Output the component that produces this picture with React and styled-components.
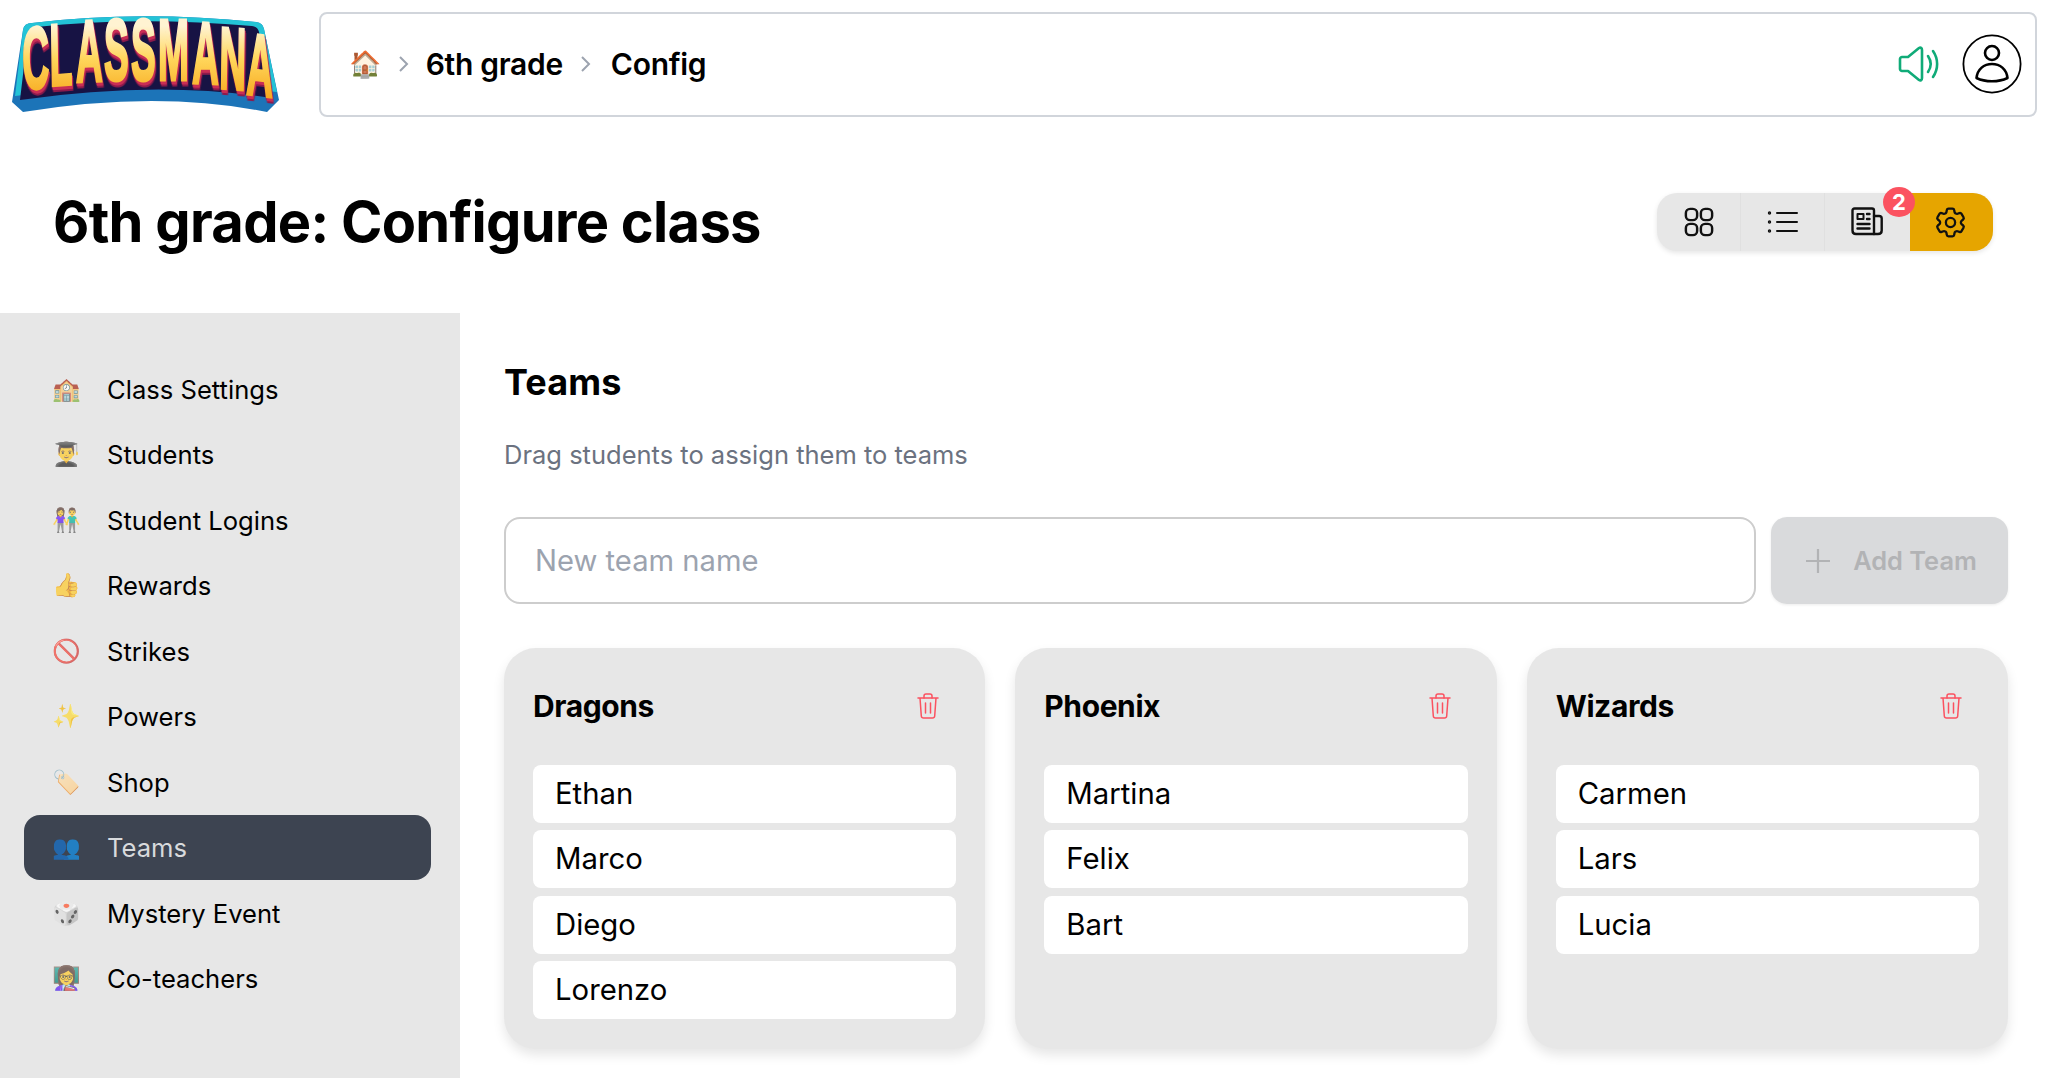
import React from "react";
import styled, { createGlobalStyle } from "styled-components";

const GlobalStyle = createGlobalStyle`
	* { box-sizing: border-box; }
	html, body { margin: 0; padding: 0; background: #ffffff; }
	body {
		width: 2048px;
		height: 1078px;
		overflow: hidden;
		font-family: Inter, "Noto Sans", sans-serif;
		color: #000000;
	}
`;

const Page = styled.div`
	display: flex;
	flex-direction: column;
	height: 1078px;
`;

const TopBar = styled.div`
	display: flex;
	align-items: flex-start;
	padding: 12px 11px 0 8px;
	gap: 39px;
`;

const Logo = styled.svg`
	flex: none;
	width: 272px;
	height: 104px;
	overflow: visible;
`;

const Header = styled.header`
	flex: 1;
	height: 105px;
	display: flex;
	align-items: center;
	justify-content: space-between;
	padding: 0 13px 2px 28px;
	border: 2px solid #d1d5db;
	border-radius: 8px;
`;

const Crumbs = styled.nav`
	display: flex;
	align-items: center;
	gap: 17px;
	font-size: 30px;
	font-weight: 600;
	letter-spacing: -0.3px;
`;

const HomeEmoji = styled.span`
	font-size: 26px;
`;

const CurrentCrumb = styled.span`
	margin-left: 3px;
`;

const HeaderActions = styled.div`
	display: flex;
	align-items: center;
	gap: 22px;
`;

const TitleRow = styled.div`
	display: flex;
	align-items: center;
	justify-content: space-between;
	height: 196px;
	padding: 14px 55px 0 53px;
`;

const Title = styled.h1`
	margin: 0;
	font-size: 56px;
	font-weight: 700;
	letter-spacing: -0.7px;
`;

const ViewSwitch = styled.div`
	position: relative;
	display: flex;
	height: 58px;
	border-radius: 20px;
	overflow: hidden;
	background: #e7e7e7;
	box-shadow: 0 2px 5px rgba(0, 0, 0, 0.1);
`;

const ViewCell = styled.div`
	width: ${(props) => props.$width}px;
	display: flex;
	align-items: center;
	justify-content: center;
	padding-right: ${(props) => props.$nudge || 0}px;
	background: ${(props) => (props.$active ? "#e6a500" : "transparent")};
	border-right: ${(props) => (props.$divider ? "1px solid #e0e0e0" : "none")};
`;

const SwitchWrap = styled.div`
	position: relative;
`;

const Badge = styled.span`
	position: absolute;
	top: -6px;
	left: 226px;
	width: 32px;
	height: 30px;
	border-radius: 50%;
	background: #fb5260;
	color: #ffffff;
	font-size: 22px;
	font-weight: 700;
	display: flex;
	align-items: center;
	justify-content: center;
`;

const Body = styled.div`
	flex: 1;
	display: flex;
	min-height: 0;
`;

const Sidebar = styled.aside`
	flex: none;
	width: 460px;
	background: #e7e7e7;
	padding: 43.5px 29px 0 24px;
	display: flex;
	flex-direction: column;
	gap: 0.5px;
`;

const NavItem = styled.div`
	height: 65px;
	display: flex;
	align-items: center;
	gap: 29px;
	padding-left: 28px;
	border-radius: 16px;
	font-size: 25.6px;
	background: ${(props) => (props.$active ? "#3d4451" : "transparent")};
	color: ${(props) => (props.$active ? "#d8dadc" : "#000000")};
`;

const NavEmoji = styled.span`
	width: 26px;
	font-size: 23px;
	line-height: 1;
	text-align: center;
	opacity: 0.7;
`;

const Main = styled.main`
	flex: 1;
	padding: 43px 40px 0 44px;
	min-width: 0;
`;

const SectionTitle = styled.h2`
	margin: 0;
	font-size: 36px;
	font-weight: 700;
	line-height: 52px;
	letter-spacing: 0.1px;
`;

const Hint = styled.p`
	margin: 25px 0 0;
	font-size: 25.5px;
	line-height: 44px;
	color: #6b7280;
`;

const AddRow = styled.div`
	display: flex;
	gap: 15px;
	margin-top: 40px;
`;

const TeamInput = styled.input`
	flex: 1;
	min-width: 0;
	height: 87px;
	padding: 0 29px;
	border: 2px solid #cdcdcd;
	border-radius: 16px;
	font: 400 29.2px Inter, sans-serif;
	outline: none;
	&::placeholder {
		color: #9ca3af;
	}
`;

const AddButton = styled.div`
	flex: none;
	width: 237px;
	height: 87px;
	display: flex;
	align-items: center;
	justify-content: center;
	gap: 22px;
	padding-left: 3px;
	border-radius: 16px;
	background: #d9dadc;
	color: #b2b3b5;
	font-size: 25.4px;
	font-weight: 600;
	box-shadow: 0 1px 3px rgba(0, 0, 0, 0.08);
`;

const TeamGrid = styled.div`
	display: grid;
	grid-template-columns: repeat(3, 1fr);
	gap: 30px;
	margin-top: 44px;
`;

const TeamCard = styled.section`
	height: 401px;
	padding: 28px 29px;
	border-radius: 32px;
	background: #e7e7e7;
	box-shadow: 0 6px 12px rgba(0, 0, 0, 0.1);
`;

const CardHead = styled.div`
	display: flex;
	align-items: center;
	justify-content: space-between;
	height: 60px;
	margin-bottom: 29px;
	padding-right: 17px;
`;

const CardTitle = styled.h3`
	margin: 0;
	font-size: 30px;
	font-weight: 700;
	letter-spacing: -0.4px;
`;

const StudentList = styled.div`
	display: flex;
	flex-direction: column;
	gap: 7.4px;
`;

const StudentRow = styled.div`
	height: 58px;
	display: flex;
	align-items: center;
	padding: 0 0 1px 22px;
	border-radius: 8px;
	background: #ffffff;
	font-size: 29.3px;
`;

const Chevron = () => (
	<svg width="11" height="20" viewBox="0 0 11 20" fill="none" stroke="#9ca3af" strokeWidth="2">
		<path d="M2 3l7 7-7 7" />
	</svg>
);

const SpeakerIcon = () => (
	<svg width="44" height="44" viewBox="0 0 44 44" fill="none" stroke="#10ab78" strokeWidth="2.600" strokeLinecap="round" strokeLinejoin="round">
		<path d="M23 6c1.600-1 3 0 3 2v28c0 2-1.400 3-3 2L12 29H6c-1 0-2-1-2-2V17c0-1 1-2 2-2h6z" />
		<path d="M32 14c3.400 5 3.400 11 0 16" />
		<path d="M37 9c5.500 8 5.500 18 0 26" />
	</svg>
);

const UserIcon = () => (
	<svg width="60" height="60" viewBox="0 0 60 60" fill="none" stroke="#000" strokeLinejoin="round">
		<circle cx="30" cy="30" r="28.600" strokeWidth="1.800" />
		<circle cx="30" cy="19" r="7" strokeWidth="2.600" />
		<path d="M14.500 44c1-9 7.500-14 15.500-14s14.500 5 15.500 14c-5 2.500-10 3.300-15.500 3.300S19.500 46.500 14.500 44z" strokeWidth="2.600" />
	</svg>
);

const GridIcon = () => (
	<svg width="30" height="30" viewBox="0 0 32 32" fill="none" stroke="#111" strokeWidth="2.600">
		<rect x="2" y="2" width="12" height="12" rx="4.500" />
		<rect x="18" y="2" width="12" height="12" rx="4.500" />
		<rect x="2" y="18" width="12" height="12" rx="4.500" />
		<rect x="18" y="18" width="12" height="12" rx="4.500" />
	</svg>
);

const ListIcon = () => (
	<svg width="32" height="24" viewBox="0 0 32 24" fill="none" stroke="#111" strokeWidth="2" strokeLinecap="round">
		<path d="M10 3h20M10 12h20M10 21h20" />
		<circle cx="2.500" cy="3" r="0.700" />
		<circle cx="2.500" cy="12" r="0.700" />
		<circle cx="2.500" cy="21" r="0.700" />
	</svg>
);

const NewsIcon = () => (
	<svg width="32" height="30" viewBox="0 0 32 30" fill="none" stroke="#111" strokeWidth="2.400" strokeLinejoin="round" strokeLinecap="round">
		<path d="M23 27H5c-2 0-3.500-1.500-3.500-3.500V3.500C1.500 2.500 2.300 1.500 3.500 1.500h17.500c1 0 2 1 2 2z" />
		<path d="M23 9h5c1.500 0 2.700 1 2.700 2.500V23.500c0 2-1.500 3.500-3.700 3.500H23" />
		<rect x="6.500" y="7" width="6" height="5" strokeWidth="2" />
		<path d="M16 7h2.500M16 12h2.500M6.500 17h12M6.500 21.500h12" />
	</svg>
);

const GearIcon = () => (
	<svg width="37" height="37" viewBox="0 0 24 24" fill="none" stroke="#111" strokeWidth="1.500" strokeLinejoin="round" strokeLinecap="round">
		<path d="M9.594 3.940c.09-.542.56-.940 1.110-.940h2.593c.55 0 1.020.398 1.110.940l.213 1.281c.063.374.313.686.645.870.074.040.147.083.220.127.324.196.720.257 1.075.124l1.217-.456a1.125 1.125 0 0 1 1.370.490l1.296 2.247a1.125 1.125 0 0 1-.260 1.431l-1.003.827c-.293.240-.438.613-.431.992a6.759 6.759 0 0 1 0 .255c-.007.378.138.750.430.990l1.005.828c.424.350.534.954.260 1.430l-1.298 2.247a1.125 1.125 0 0 1-1.369.491l-1.217-.456c-.355-.133-.750-.072-1.076.124a6.570 6.570 0 0 1-.220.128c-.331.183-.581.495-.644.869l-.213 1.280c-.090.543-.560.941-1.110.941h-2.594c-.550 0-1.020-.398-1.110-.940l-.213-1.281c-.062-.374-.312-.686-.644-.870a6.520 6.520 0 0 1-.220-.127c-.325-.196-.720-.257-1.076-.124l-1.217.456a1.125 1.125 0 0 1-1.369-.490l-1.297-2.247a1.125 1.125 0 0 1 .260-1.431l1.004-.827c.292-.240.437-.613.430-.992a6.932 6.932 0 0 1 0-.255c.007-.378-.138-.750-.430-.990l-1.004-.828a1.125 1.125 0 0 1-.260-1.430l1.297-2.247a1.125 1.125 0 0 1 1.370-.491l1.216.456c.356.133.751.072 1.076-.124.072-.044.146-.087.220-.128.332-.183.582-.495.644-.869l.214-1.281z" />
		<circle cx="12" cy="12" r="3" />
	</svg>
);

const TrashIcon = () => (
	<svg width="22" height="26" viewBox="0 0 22 26" fill="none" stroke="#fb5260" strokeWidth="1.500" strokeLinecap="round" strokeLinejoin="round">
		<path d="M1 5h20M3 5l1.300 18c.1 1.200 1 2 2.200 2h9c1.200 0 2.100-.8 2.200-2L19 5" />
		<path d="M7 5V3c0-1 .8-2 2-2h4c1.200 0 2 1 2 2v2" />
		<path d="M8.500 10v10M13.500 10v10" />
	</svg>
);

const PlusIcon = () => (
	<svg width="26" height="26" viewBox="0 0 26 26" fill="none" stroke="#b2b3b5" strokeWidth="2.200">
		<path d="M13 1v24M1 13h24" />
	</svg>
);

// one text run, each glyph placed on the arch with x/y lists, then squeezed horizontally
const logoXs = [15, 42, 68, 96, 123, 150, 184, 211, 238].map((x) => x / 0.42).join(" ");
const logoYs = "78 74 70 68 68 68 71 76 82";
const logoTilt = "-3 -2 -1 0 0 0 1 2 3";

const LogoMark = () => (
	<Logo viewBox="0 0 272 104">
		<defs>
			<linearGradient id="logoFill" gradientUnits="userSpaceOnUse" x1="0" y1="14" x2="0" y2="86">
				<stop offset="0" stopColor="#fff3d2" />
				<stop offset="0.45" stopColor="#ffd75c" />
				<stop offset="1" stopColor="#f7a91f" />
			</linearGradient>
		</defs>
		<path d="M15 18 Q16 11 24 11 Q130 -2 248 10 Q255 11 256 17 L271 88 L259 100 Q150 78 15 100 L4 90 Z" fill="#1c74b8" />
		<path d="M15 18 Q16 11 24 11 Q130 -2 248 10 Q255 11 256 17 L269 80 Q140 66 7 84 Z" fill="#23c3d6" />
		<path d="M20 20 Q22 15 28 15 Q130 4 244 14 Q250 15 251 20 L264 86 Q150 68 12 88 Z" fill="#171344" />
		<g transform="scale(0.42 1)">
			<text
				fontFamily="'Liberation Sans', sans-serif"
				fontWeight="700"
				fontSize="88"
				x={logoXs}
				y={logoYs}
				rotate={logoTilt}
				fill="url(#logoFill)"
				stroke="url(#logoFill)"
				strokeWidth="3"
				style={{ filter: "drop-shadow(2px 3px 0 #c92d55) drop-shadow(1px 2px 0 #8d1a4c)" }}
			>
				CLASSMANA
			</text>
		</g>
	</Logo>
);

const navItems = [
	["🏫", "Class Settings"],
	["👨‍🎓", "Students"],
	["👫", "Student Logins"],
	["👍", "Rewards"],
	["🚫", "Strikes"],
	["✨", "Powers"],
	["🏷️", "Shop"],
	["👥", "Teams"],
	["🎲", "Mystery Event"],
	["👩‍🏫", "Co-teachers"],
];

const teams = [
	{ name: "Dragons", students: ["Ethan", "Marco", "Diego", "Lorenzo"] },
	{ name: "Phoenix", students: ["Martina", "Felix", "Bart"] },
	{ name: "Wizards", students: ["Carmen", "Lars", "Lucia"] },
];

const App = () => {
	return (
		<Page>
			<GlobalStyle />
			<TopBar>
				<LogoMark />
				<Header>
					<Crumbs>
						<HomeEmoji>🏠</HomeEmoji>
						<Chevron />
						<span>6th grade</span>
						<Chevron />
						<CurrentCrumb>Config</CurrentCrumb>
					</Crumbs>
					<HeaderActions>
						<SpeakerIcon />
						<UserIcon />
					</HeaderActions>
				</Header>
			</TopBar>
			<TitleRow>
				<Title>6th grade: Configure class</Title>
				<SwitchWrap>
					<ViewSwitch>
						<ViewCell $width={84} $divider><GridIcon /></ViewCell>
						<ViewCell $width={84} $divider><ListIcon /></ViewCell>
						<ViewCell $width={85} $nudge={2}><NewsIcon /></ViewCell>
						<ViewCell $width={83} $nudge={2} $active><GearIcon /></ViewCell>
					</ViewSwitch>
					<Badge>2</Badge>
				</SwitchWrap>
			</TitleRow>
			<Body>
				<Sidebar>
					{navItems.map(([emoji, label]) => (
						<NavItem key={label} $active={label === "Teams"}>
							<NavEmoji>{emoji}</NavEmoji>
							{label}
						</NavItem>
					))}
				</Sidebar>
				<Main>
					<SectionTitle>Teams</SectionTitle>
					<Hint>Drag students to assign them to teams</Hint>
					<AddRow>
						<TeamInput placeholder="New team name" />
						<AddButton><PlusIcon />Add Team</AddButton>
					</AddRow>
					<TeamGrid>
						{teams.map((team) => (
							<TeamCard key={team.name}>
								<CardHead>
									<CardTitle>{team.name}</CardTitle>
									<TrashIcon />
								</CardHead>
								<StudentList>
									{team.students.map((student) => (
										<StudentRow key={student}>{student}</StudentRow>
									))}
								</StudentList>
							</TeamCard>
						))}
					</TeamGrid>
				</Main>
			</Body>
		</Page>
	);
};

export default App;
